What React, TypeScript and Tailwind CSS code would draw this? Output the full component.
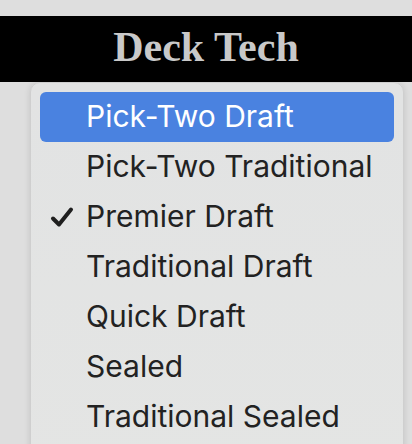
const items = [
  "Pick-Two Draft",
  "Pick-Two Traditional",
  "Premier Draft",
  "Traditional Draft",
  "Quick Draft",
  "Sealed",
  "Traditional Sealed",
];

const highlighted = "Pick-Two Draft";
const checked = "Premier Draft";

function Check() {
  return (
    <svg width="24" height="22" viewBox="0 0 24 22" className="absolute left-[10px] top-[14px]">
      <path d="M3 12.5 L9 18.5 L21 3.5" fill="none" stroke="#1f1f1f" strokeWidth="4" strokeLinecap="round" strokeLinejoin="round" />
    </svg>
  );
}

export default function App() {
  return (
    <div className="w-[412px] h-[444px] overflow-hidden bg-[#dedede] pt-4">
      <div className="h-[66px] bg-black flex items-center justify-center">
        <h1 className="text-[42px] font-bold text-[#c9c9c9] leading-none pb-1 [font-family:'Liberation_Serif',serif]">
          Deck Tech
        </h1>
      </div>
      <div className="ml-[30px] w-[374px] h-[400px] rounded-t-[10px] bg-gradient-to-b from-[#e2e3e3] to-[#e4e5e4] border border-[#cfcfcf] shadow-[0_0_6px_rgba(0,0,0,0.12)] px-[9px] pt-[9px] [font-family:Inter,'Noto_Sans',sans-serif]">
        {items.map((item) => {
          const active = item === highlighted;
          return (
            <div
              key={item}
              className={`relative h-[50px] rounded-[6px] pl-[46px] flex items-center text-[30px] ${
                active ? "bg-[#4a82e0] text-white" : "text-[#222222]"
              }`}
            >
              {item === checked && <Check />}
              <span className="pb-[1px]">{item}</span>
            </div>
          );
        })}
      </div>
    </div>
  );
}
